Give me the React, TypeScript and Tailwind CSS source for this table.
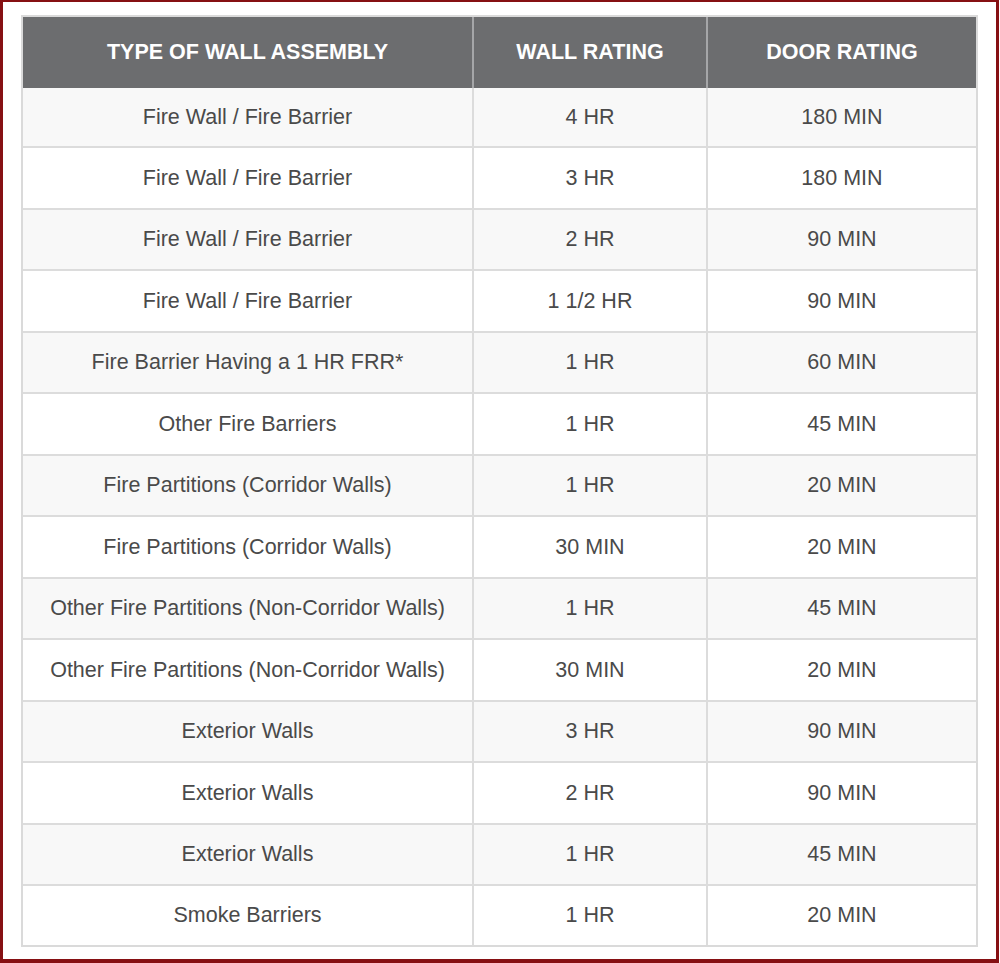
const rows = [
  ["Fire Wall / Fire Barrier", "4 HR", "180 MIN"],
  ["Fire Wall / Fire Barrier", "3 HR", "180 MIN"],
  ["Fire Wall / Fire Barrier", "2 HR", "90 MIN"],
  ["Fire Wall / Fire Barrier", "1 1/2 HR", "90 MIN"],
  ["Fire Barrier Having a 1 HR FRR*", "1 HR", "60 MIN"],
  ["Other Fire Barriers", "1 HR", "45 MIN"],
  ["Fire Partitions (Corridor Walls)", "1 HR", "20 MIN"],
  ["Fire Partitions (Corridor Walls)", "30 MIN", "20 MIN"],
  ["Other Fire Partitions (Non-Corridor Walls)", "1 HR", "45 MIN"],
  ["Other Fire Partitions (Non-Corridor Walls)", "30 MIN", "20 MIN"],
  ["Exterior Walls", "3 HR", "90 MIN"],
  ["Exterior Walls", "2 HR", "90 MIN"],
  ["Exterior Walls", "1 HR", "45 MIN"],
  ["Smoke Barriers", "1 HR", "20 MIN"],
];

const headers = ["TYPE OF WALL ASSEMBLY", "WALL RATING", "DOOR RATING"];

export default function App() {
  return (
    <div className="w-[1000px] h-[963px] bg-white" style={{ fontFamily: '"Liberation Sans", Arial, sans-serif' }}>
      <div className="w-[999px] h-[963px] border-[#861013] border-l-[3px] border-t-2 border-r-[3px] border-b-4 pl-[18px] pt-[13px]">
        {/* table */}
        <div className="w-[957px] border-2 border-[#dadada]">
          <div className="grid grid-cols-[451px_234px_268px] h-[71px] bg-[#6c6d6f]">
            {headers.map((h, j) => (
              <div
                key={h}
                className={`flex items-center justify-center text-white font-bold text-[21.5px] ${j < 2 ? "border-r-2 border-[#a5a6a8]" : ""}`}
              >
                {h}
              </div>
            ))}
          </div>
          {rows.map((r, i) => (
            <div
              key={i}
              className={`grid grid-cols-[451px_234px_268px] ${i % 2 === 0 ? "bg-[#f8f8f8]" : "bg-white"} ${
                i === 0 ? "h-[60px]" : i === rows.length - 1 ? "h-[59px]" : "h-[61.5px]"
              } ${i < rows.length - 1 ? "border-b-2 border-[#dcdcdc]" : ""}`}
            >
              {r.map((c, j) => (
                <div
                  key={j}
                  className={`flex items-center justify-center text-[21.5px] text-[#4a4a4a] ${j < 2 ? "border-r-2 border-[#dcdcdc]" : ""}`}
                >
                  {c}
                </div>
              ))}
            </div>
          ))}
        </div>
      </div>
    </div>
  );
}
